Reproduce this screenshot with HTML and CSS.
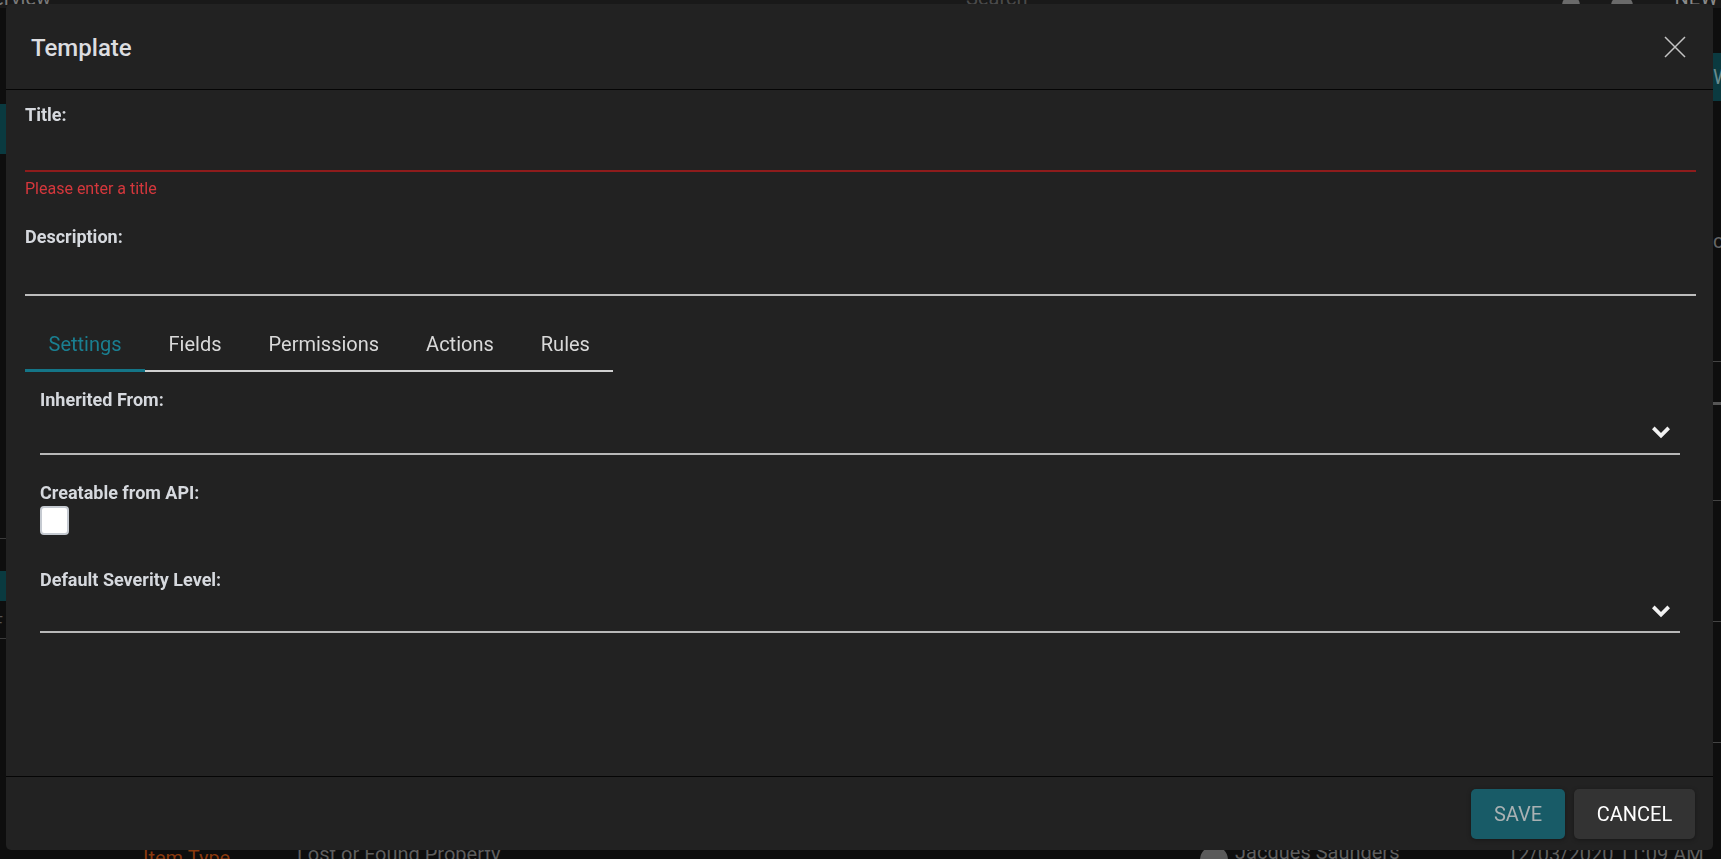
FILE: index.html
```html
<!DOCTYPE html>
<html lang="en">
<head>
<meta charset="utf-8">
<title>Template</title>
<link rel="stylesheet" href="styles.css">
</head>
<body>
<div class="app">
  <div class="app-top">
    <span class="top-title">Overview</span>
    <span class="top-search">Search</span>
    <span class="top-icon top-icon-search"></span>
    <span class="top-icon top-icon-user"></span>
    <span class="top-new">NEW</span>
  </div>
  <div class="app-mid">
    <div class="side-left">
      <div class="sl-teal1"></div>
      <div class="sl-line sl-line1"></div>
      <div class="sl-teal2"></div>
      <div class="sl-char">F</div>
      <div class="sl-line sl-line2"></div>
    </div>
    <div class="side-right">
      <div class="sr-teal">W</div>
      <div class="sr-char">c</div>
      <div class="sr-line sr-line1"></div>
      <div class="sr-line sr-line2"></div>
      <div class="sr-line sr-line3"></div>
      <div class="sr-line sr-line4"></div>
      <div class="sr-line sr-line5"></div>
    </div>
  </div>
  <div class="app-bottom">
    <span class="bt-type">Item Type</span>
    <span class="bt-name">Lost or Found Property</span>
    <span class="bt-avatar"></span>
    <span class="bt-user">Jacques Saunders</span>
    <span class="bt-date">12/03/2020 11:09 AM</span>
  </div>
</div>

<div class="modal">
  <div class="modal-header">
    <h2 class="modal-title">Template</h2>
    <button class="close-btn" aria-label="Close">
      <svg width="22" height="22" viewBox="0 0 22 22"><path d="M1 1 L21 21 M21 1 L1 21" stroke="#c4c4c4" stroke-width="1.5" fill="none"/></svg>
    </button>
  </div>
  <div class="modal-body">
    <div class="field">
      <label class="label">Title:</label>
      <div class="input input-error"></div>
      <div class="error-text">Please enter a title</div>
    </div>
    <div class="field field-desc">
      <label class="label">Description:</label>
      <div class="input input-desc"></div>
    </div>
    <div class="tabs">
      <div class="tab tab-active">Settings</div>
      <div class="tab">Fields</div>
      <div class="tab">Permissions</div>
      <div class="tab">Actions</div>
      <div class="tab">Rules</div>
    </div>
    <div class="tab-panel">
      <label class="label label-inherited">Inherited From:</label>
      <div class="select">
        <svg class="chevron" width="20" height="14" viewBox="0 0 20 14"><path d="M1 4.2 L3.6 1.6 L10 8 L16.4 1.6 L19 4.2 L10 13.2 Z" fill="#f2f2f2"/></svg>
      </div>
      <label class="label label-creatable">Creatable from API:</label>
      <div class="checkbox"></div>
      <label class="label label-severity">Default Severity Level:</label>
      <div class="select select-severity">
        <svg class="chevron" width="20" height="14" viewBox="0 0 20 14"><path d="M1 4.2 L3.6 1.6 L10 8 L16.4 1.6 L19 4.2 L10 13.2 Z" fill="#f2f2f2"/></svg>
      </div>
    </div>
  </div>
  <div class="modal-footer">
    <button class="btn btn-save">SAVE</button>
    <button class="btn btn-cancel">CANCEL</button>
  </div>
</div>
</body>
</html>
```
FILE: styles.css
```css
* { box-sizing: border-box; }
html, body { margin: 0; padding: 0; }
body {
  width: 1721px;
  height: 859px;
  overflow: hidden;
  background: #0e0e0e;
  font-family: Roboto, "Liberation Sans", sans-serif;
  color: #d8d8d8;
}

/* background application (dimmed) */
.app {
  height: 859px;
  display: flex;
  flex-direction: column;
}
.app-top {
  height: 8px;
  flex: none;
  background: #191919;
  display: flex;
  align-items: flex-end;
  font-size: 20px;
  line-height: 20px;
  color: #7a7a7a;
  white-space: nowrap;
}
.app-top > * { flex: none; }
.top-title { margin-left: -30px; }
.top-search { margin-left: 915px; color: #4a4a4a; }
.top-icon { width: 18px; height: 18px; border-radius: 50%; background: #6a6a6a; margin-bottom: -6px; }
.top-icon-search { margin-left: 534px; }
.top-icon-user { margin-left: 31px; width: 22px; }
.top-new { margin-left: 42px; color: #8a8a8a; }

.app-mid {
  flex: 1;
  display: flex;
  justify-content: space-between;
}
.side-left { width: 6px; display: flex; flex-direction: column; }
.sl-teal1 { margin-top: 96px; height: 50px; background: #0a3a40; }
.sl-line { height: 1px; background: #3a3a3a; }
.sl-line1 { margin-top: 384px; }
.sl-teal2 { margin-top: 32px; height: 30px; background: #0a3a40; }
.sl-char { margin-top: 14px; font-size: 16px; line-height: 16px; color: #555; margin-left: -6px; }
.sl-line2 { margin-top: 7px; }

.side-right { width: 8px; display: flex; flex-direction: column; }
.sr-teal { margin-top: 45px; height: 48px; background: #0b3a40; color: #6a8a8e; font-size: 20px; line-height: 48px; }
.sr-char { margin-top: 130px; font-size: 20px; line-height: 20px; color: #666; }
.sr-line { height: 1px; background: #444; }
.sr-line1 { margin-top: 110px; }
.sr-line2 { height: 3px; background: #555; margin-top: 40px; }
.sr-line3 { margin-top: 95px; }
.sr-line4 { margin-top: 120px; }
.sr-line5 { margin-top: 120px; }

.app-bottom {
  height: 9px;
  flex: none;
  display: flex;
  align-items: flex-start;
  overflow: hidden;
  font-size: 20px;
  line-height: 20px;
  color: #5e5e5e;
  white-space: nowrap;
}
.app-bottom > * { flex: none; }
.bt-type { margin-left: 143px; width: 154px; color: #8a3a0e; margin-top: -2px; }
.bt-name { width: 903px; margin-top: -6px; }
.bt-avatar { width: 28px; height: 28px; border-radius: 50%; background: #5a5a5a; margin-top: -4px; margin-right: 7px; }
.bt-user { width: 272px; margin-top: -8px; }
.bt-date { margin-top: -6px; }

/* modal */
.modal {
  position: fixed;
  top: 4px;
  left: 6px;
  right: 8px;
  bottom: 9px;
  background: #222222;
  border-radius: 5px;
  display: flex;
  flex-direction: column;
}
.modal-header {
  height: 86px;
  flex: none;
  border-bottom: 1px solid #050505;
  display: flex;
  align-items: center;
  justify-content: space-between;
  padding: 0 27px 0 25px;
}
.modal-title {
  margin: 0;
  font-size: 24px;
  font-weight: 500;
  color: #dcdde0;
  padding-top: 2px;
}
.close-btn {
  width: 22px;
  height: 22px;
  padding: 0;
  border: 0;
  background: transparent;
  display: flex;
}

.modal-body {
  flex: 1;
  padding: 0 17px 0 19px;
  display: flex;
  flex-direction: column;
}
.label {
  display: block;
  font-size: 18px;
  line-height: 22px;
  font-weight: 700;
  color: #d6d9de;
}
.field .label { margin-top: 14px; }
.input { height: 48px; border-bottom: 2px solid #bdbdbd; }
.input-error { height: 46px; border-bottom-color: #8e1c1c; }
.error-text {
  margin-top: 7px;
  font-size: 16px;
  line-height: 20px;
  color: #d5373c;
}
.field-desc .label { margin-top: 27px; }

.tabs {
  margin-top: 26px;
  display: flex;
  align-self: flex-start;
  border-bottom: 2px solid #d0d0d0;
}
.tab {
  height: 50px;
  padding: 0 23.5px 3px;
  display: flex;
  align-items: center;
  font-size: 20px;
  color: #d9d9d9;
  margin-bottom: -2px;
  border-bottom: 3px solid transparent;
}
.tab-active { color: #1a7f91; border-bottom-color: #147587; }

.tab-panel {
  padding: 0 16px 0 15px;
  display: flex;
  flex-direction: column;
}
.label-inherited { margin-top: 17px; }
.select {
  height: 44px;
  border-bottom: 2px solid #b8b8b8;
  display: flex;
  align-items: center;
  justify-content: flex-end;
  padding: 0 9px 0 0;
}
.label-creatable { margin-top: 27px; }
.checkbox {
  margin-top: 2px;
  width: 29px;
  height: 29px;
  background: #ffffff;
  border: 2px solid #c5cad1;
  border-radius: 4px;
}
.label-severity { margin-top: 34px; }
.select-severity { height: 42px; }

.modal-footer {
  height: 74px;
  flex: none;
  border-top: 1px solid #050505;
  display: flex;
  justify-content: flex-end;
  align-items: flex-start;
  gap: 9px;
  padding: 12px 18px 0 0;
}
.btn {
  height: 50px;
  border: 0;
  border-radius: 5px;
  font-family: Roboto, "Liberation Sans", sans-serif;
  font-size: 20px;
  font-weight: 400;
  box-shadow: 0 1px 4px rgba(0,0,0,0.35);
}
.btn-save { width: 94px; background: #185b67; color: #a9b1b3; }
.btn-cancel { width: 121px; background: #333333; color: #ffffff; }
```
